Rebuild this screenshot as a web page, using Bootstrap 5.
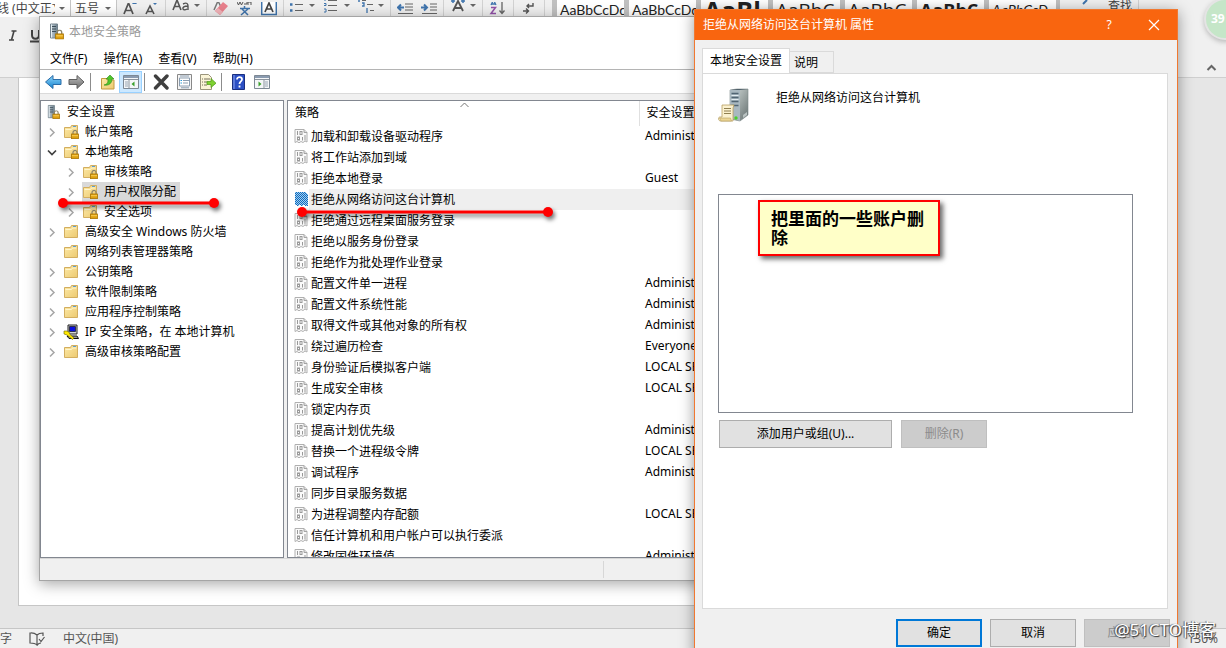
<!DOCTYPE html>
<html lang="zh-CN">
<head>
<meta charset="utf-8">
<meta name="viewport" content="width=device-width, initial-scale=1">
<title>本地安全策略</title>
<link href="https://cdn.jsdelivr.net/npm/bootstrap@5.3.0/dist/css/bootstrap.min.css" rel="stylesheet">
<style>
  body { font: 12px/20px "Noto Sans", "Noto Sans CJK SC", sans-serif; color: #000; background: #e6e6e6; }
  svg { display: block; flex: none; }
  button { font: inherit; color: inherit; }
  ul { list-style: none; margin: 0; padding: 0; }

  /* word processor behind */
  .ribbon { background: #f0f0f0; height: 78px; border-bottom: 1px solid #cfcfcf; color: #444; }
  .ribbon-top { height: 17px; }
  .ribbon button, .bare { border: 0; background: transparent; padding: 0; }
  .rgroup { border-right: 1px solid #d2d2d2; padding: 0 6px; gap: 8px; height: 17px; }
  .combo { background: #fff; border-right: 1px solid #c6c6c6; padding-right: 5px; height: 17px; }
  .combo input { border: 0; background: transparent; padding: 0; font: inherit; color: #444; height: 14px; min-width: 0; outline: 0; }
  .font-name { width: 71px; } .font-size { width: 46px; }
  .font-name input { text-indent: -3px; }
  .caret { width: 0; border: 3px solid transparent; border-top-color: #666; border-bottom: 0; }
  .gallery { background: #c0c0c0; margin-left: 7px; padding: 0 5px; gap: 5px; height: 17px; width: 508px; }
  .gallery button { background: #fff; flex: 0 0 67px; overflow: hidden; text-align: left; padding-left: 3px; color: #222; white-space: nowrap; height: 17px; }
  .st-body { font: 14px/20px Lato, sans-serif; }
  .st-h1 { font: bold 25px/20px "Open Sans", sans-serif; }
  .st-h2 { font: 19px/20px "Open Sans", sans-serif; }
  .st-h3 { font: bold 18px/20px "Open Sans", sans-serif; }
  .st-em { font: italic 14px/20px Lato, sans-serif; }
  .style-row { gap: 12px; }
  .doc { background: #fff; border: 1px solid #c6c6c6; border-top: 0; margin: 0 140px 22px 18px; }
  .appstatus { height: 20px; border-top: 1px solid #c6c6c6; background: #f0f0f0; color: #555; }
  .orb { right: -20px; top: -2px; width: 42px; height: 42px; border-radius: 50%; border: 2px solid #e4e4e4; background: #c5e6c8; color: #fff; font: bold 12px/38px "Open Sans", sans-serif; padding-left: 5px; box-shadow: 0 2px 5px #bbb; }

  /* policy console */
  .console { left: 39px; right: 200px; top: 16px; bottom: 67px; border: 1px solid #a5a5a5; background: #f0f0f0; box-shadow: 0 3px 14px rgba(0,0,0,.35); }
  .console-title { height: 30px; padding: 0 9px; gap: 4px; color: #999; background: #fff; }
  .menubar { height: 24px; padding: 2px 10px 0; gap: 16px; background: #fff; border-bottom: 1px solid #b4b4b4; }
  .toolbar { height: 24px; padding: 1px 0 0 2px; background: #fff; border-bottom: 1px solid #dadada; }
  .toolbar button { width: 23px; height: 22px; display: flex; align-items: center; justify-content: center; border: 1px solid transparent; background: none; padding: 0; }
  .toolbar button.on { background: #cce8ff; border-color: #99d1ff; }
  .tsep { width: 8px; height: 18px; border-left: 1px solid #8c8c8c; margin-left: 2px; margin-right: -2px; }
  .panes { margin-top: 6px; gap: 3px; min-height: 0; }
  .pane { background: #fff; border: 1px solid #828790; overflow: hidden; }
  .tree { width: 244px; padding: 1px 0 0 6px; }
  .tree .node { height: 20px; gap: 2px; position: relative; white-space: nowrap; }
  .tree .lvl2 { padding-left: 19px; }
  .chev { width: 14px; height: 20px; }
  .node .lab { padding: 0 4px; }
  .node .picked { background: #d9d9d9; }
  .node .picked .lab { padding-left: 6px; }
  .policy { width: 100%; table-layout: fixed; border-collapse: collapse; }
  .policy th { font-weight: normal; height: 25px; padding: 0 7px; border: 0; }
  .policy th:first-child { width: 351px; border-right: 1px solid #e0e0e0; position: relative; }
  .policy td { height: 21px; padding: 0 0 0 6px; white-space: nowrap; }
  .policy td .lab { line-height: 21px; flex: 1; padding-left: 2px; }
  .policy tr.hot .lab, .policy tr.hot td + td { background: #efefef; }
  .sort { left: 172px; top: 1px; }
  .console-status { height: 22px; border-top: 1px solid #d7d7d7; }
  .console-status div { width: 564px; margin: 2px 0; border-right: 1px solid #d7d7d7; }
  .mark-line { pointer-events: none; filter: drop-shadow(2px 3px 2px rgba(0,0,0,.55)); z-index: 2; }
  .ml-tree { left: -9px; top: 15px; }
  .ml-list { left: 2px; top: 16px; }

  /* properties dialog */
  .dialog { right: 48px; top: 9px; bottom: -8px; width: 484px; border: 1px solid #f07830; background: #f0f0f0; box-shadow: 0 3px 14px rgba(0,0,0,.4); }
  .dialog-title { height: 30px; background: #f9650f; color: #fff; padding: 0 15px 0 8px; }
  .dialog-title button { border: 0; background: none; padding: 0; width: 14px; }
  .tabs { padding: 9px 7px 0; height: 33px; }
  .tabs button { border: 1px solid #dadada; background: #f0f0f0; padding: 2px 3px 0 4px; height: 22px; line-height: 18px; border-left: 0; width: 44px; text-align: left; }
  .tabs button.cur { background: #fff; border: 1px solid #dadada; border-bottom: 0; height: 25px; width: 88px; padding: 0 0 0 7px; position: relative; z-index: 1; }
  .sheet { margin: 0 9px 0 7px; background: #fff; border: 1px solid #dadada; padding: 14px 34px 0 15px; }
  .sheet .caption { padding-left: 26px; }
  .users { width: 100%; height: 219px; border: 1px solid #828790; background: #fff; display: block; appearance: none; padding: 0; outline: 0; border-radius: 0; }
  .note { left: 40px; top: 6px; width: 182px; padding: 6px 10px 8px 11px; border: 2px solid #f00; background: #ffffc8; font: bold 17px/19px "Noto Sans CJK SC", sans-serif; box-shadow: 3px 3px 5px rgba(0,0,0,.6); }
  .user-actions { gap: 9px; padding: 7px 0 0 1px; }
  .wbtn { height: 28px; width: 86px; border: 1px solid #adadad; background: #e1e1e1; padding: 0; }
  .wbtn.wide { width: 173px; }
  .wbtn.def { border: 2px solid #0078d7; }
  .wbtn:disabled { background: #ccc; border-color: #bfbfbf; color: #8b8b8b; }
  .dialog-foot { padding: 10px 7px 0 0; gap: 8px; height: 46px; }
  .wmark { right: 10px; bottom: 6px; font-size: 17px; line-height: 24px; color: #fff; text-shadow: 1px 1px 1px #333, -1px 0 1px #555; z-index: 5; }
</style>
</head>
<body class="vh-100 overflow-hidden position-relative d-flex flex-column">

<svg width="0" height="0" class="position-absolute" aria-hidden="true">
  <defs>
    <linearGradient id="gf" x2="1" y2="1"><stop stop-color="#fdeaa8"/><stop offset="1" stop-color="#ecc970"/></linearGradient>
    <linearGradient id="gs" x2="1"><stop stop-color="#c8d4dc"/><stop offset="1" stop-color="#6b7f8c"/></linearGradient>
    <linearGradient id="gb" x2="0" y2="1"><stop stop-color="#8fd6fb"/><stop offset="1" stop-color="#1583cf"/></linearGradient>
    <linearGradient id="gg" x2="0" y2="1"><stop stop-color="#bdbdbd"/><stop offset="1" stop-color="#6c6c6c"/></linearGradient>
    <linearGradient id="gt" x2="1" y2="1"><stop stop-color="#d7dfdd"/><stop offset="1" stop-color="#65706f"/></linearGradient>
    <symbol id="i-lock" viewBox="0 0 8 9"><path d="M2 4V2.500a2 2 0 0 1 4 0V4" fill="none" stroke="#8c8468" stroke-width="1.200"/><rect x=".5" y="4" width="7" height="4.600" fill="#dfa010" stroke="#a87506" stroke-width=".8"/><path d="M1 5.700h6" stroke="#ffd968" stroke-width=".8"/></symbol>
    <symbol id="i-folder" viewBox="0 0 16 16"><path d="M1.500 3.500h6l1-2h6v12h-13z" fill="url(#gf)" stroke="#d3ae60"/><path d="M2.500 5.500h6l1-1.500h4" fill="none" stroke="#fff6cf"/><path d="M10 2.500h3" stroke="#5c9ed0"/></symbol>
    <symbol id="i-flock" viewBox="0 0 16 16"><use href="#i-folder" width="16" height="16"/><use href="#i-lock" x="8" y="6" width="8" height="9"/></symbol>
    <symbol id="i-root" viewBox="0 0 16 16"><path d="M1.500.5h7v14h-7z" fill="url(#gs)" stroke="#74838d"/><path d="M3 3h4M3 5.500h4M3 8h4" stroke="#3c4c57"/><path d="M2.500 1v13" stroke="#e8f0f4"/><use href="#i-lock" x="6" y="6" width="9" height="10"/></symbol>
    <symbol id="i-ip" viewBox="0 0 16 16"><path d="M5 1h9v9H5z" fill="#d5d5d5" stroke="#222"/><path d="M6.500 2.500h6v5h-6z" fill="#0a10e0" stroke="#111" stroke-width=".7"/><path d="M4 12h10l1.500 2.500H6z" fill="#9a9a9a" stroke="#111"/><path d="M1 7h3l3 2-.5 1L11 14l-1.500 1.500L4 11 1 10z" fill="#ffe800" stroke="#6a6100" stroke-width=".6"/></symbol>
    <symbol id="i-pol" viewBox="0 0 14 16"><path d="M.5 1.500h9l3 3V14l-2-1-2 1.500-2-1-2 1.300-2-1.300-2 1z" fill="#fafafa" stroke="#b0b0b0"/><path d="M9.500 1.500v3h3" fill="#ddd" stroke="#a4a4a4"/><path d="M3 3v4M8 9v3.500" stroke="#999"/><rect x="5.500" y="3.500" width="2" height="3" fill="none" stroke="#999"/><rect x="3" y="9" width="2" height="3" fill="none" stroke="#999"/><path d="M10.500 7v5.500" stroke="#999"/></symbol>
    <symbol id="i-r" viewBox="0 0 14 20"><path d="M3 6.500l4 4-4 4" fill="none" stroke="#a6a6a6" stroke-width="1.500"/></symbol>
    <symbol id="i-d" viewBox="0 0 14 20"><path d="M1 8.500l4 4 4-4" fill="none" stroke="#404040" stroke-width="1.700"/></symbol>
    <symbol id="i-pane" viewBox="0 0 16 16"><path d="M.5 1.500h15v13H.5z" fill="#f4f6f8" stroke="#7d8894"/><path d="M1 3h14" stroke="#8a9bb0" stroke-width="2"/><path d="M1 5.500h14M6 6v8" stroke="#8b949e"/><path d="M2 8h3M2 10h3M2 12h3" stroke="#9aa7b5"/></symbol>
  </defs>
</svg>

<header class="ribbon flex-shrink-0 position-relative">
  <div class="ribbon-top d-flex align-items-start">
    <div class="combo font-name d-flex align-items-center"><input class="flex-fill w-25" aria-label="字体" value="线 (中文正文)"><span class="caret ms-1"></span></div>
    <div class="combo font-size d-flex align-items-center ps-1"><input class="flex-fill w-25" aria-label="字号" value="五号"><span class="caret"></span></div>
    <div class="rgroup d-flex">
      <button aria-label="增大字号"><svg width="14" height="12"><path d="M1 11L5.500 0 10 11M3 7.500h5" fill="none" stroke="#555" stroke-width="1.700"/><path d="M9 1l2.500-3L14 1z" fill="#3f74ad"/></svg></button>
      <button aria-label="缩小字号"><svg width="14" height="12"><path d="M1 11L5 3l4 8M2.500 8.500h5" fill="none" stroke="#555" stroke-width="1.600"/><path d="M8 0h4l-2 2z" fill="#3f74ad"/></svg></button>
    </div>
    <div class="rgroup d-flex">
      <button aria-label="更改大小写" class="d-flex"><svg width="18" height="12"><path d="M1 10L5 0l4 10M2.500 6.500h5" fill="none" stroke="#555" stroke-width="1.600"/><path d="M11 4c4-2 5 0 5 2v4M15.500 6c-7 0-5 6-.5 3" fill="none" stroke="#555" stroke-width="1.400"/></svg><span class="caret mt-1 ms-1"></span></button>
    </div>
    <div class="rgroup d-flex">
      <button aria-label="清除格式"><svg width="16" height="14"><path d="M1 8L5-1l3 6" fill="none" stroke="#777" stroke-width="1.500"/><path d="M2 9l8-9 5 4-8 9z" fill="#e8808c"/><path d="M2 9l3-3 5 4-3 3z" fill="#f3b3b9"/></svg></button>
      <button aria-label="拼音指南"><svg width="16" height="14"><path d="M0 0l1.500 3L3 0l1.500 3L6 0M7 2h3V0M11 3V0h3v3" fill="none" stroke="#555"/><path d="M7.500 4v2.500M3 6.500h10M5 7l6 6M11 7l-7 6" fill="none" stroke="#3f74ad" stroke-width="1.500"/></svg></button>
      <button aria-label="字符边框"><svg width="16" height="14"><path d="M.7-1h14.600v13.500H.7z" fill="#fff" stroke="#3f74ad" stroke-width="1.500"/><path d="M4 10l4-9 4 9M5.500 7h5" fill="none" stroke="#444" stroke-width="1.700"/></svg></button>
    </div>
    <div class="rgroup d-flex">
      <button class="d-flex gap-1" aria-label="项目符号"><svg width="15" height="13"><path d="M0 4.500h2.500M0 10.500h2.500" stroke="#3f74ad" stroke-width="2.500"/><path d="M5 4.500h8M5 10.500h8" stroke="#666"/></svg><span class="caret mt-1"></span></button>
      <button class="d-flex gap-1" aria-label="编号"><svg width="17" height="13"><path d="M1 0h2M1 3.500h2v2H1M1 9h2v3H1" fill="none" stroke="#3f74ad"/><path d="M5 .5h9M5 5.500h9M5 10.500h9" stroke="#666"/></svg><span class="caret mt-1"></span></button>
      <button class="d-flex gap-1" aria-label="多级列表"><svg width="16" height="13"><path d="M0 1h2M4 3h2v3H4M9 8v5" fill="none" stroke="#3f74ad" stroke-width="1.300"/><path d="M4 .5h4M9 4.500h6M12 10.500h4" stroke="#666"/></svg><span class="caret mt-1"></span></button>
    </div>
    <div class="rgroup d-flex">
      <button aria-label="减少缩进"><svg width="16" height="12"><path d="M8 1h8M8 4h8M8 7h8M1 10.500h15" stroke="#666"/><path d="M7 4.500H1M4 1.500l-3 3 3 3" fill="none" stroke="#3f74ad" stroke-width="2"/></svg></button>
      <button aria-label="增加缩进"><svg width="16" height="12"><path d="M9 1h7M9 4h7M9 7h7M1 10.500h15" stroke="#666"/><path d="M0 4.500h6M3 1.500l3 3-3 3" fill="none" stroke="#3f74ad" stroke-width="2"/></svg></button>
    </div>
    <div class="rgroup d-flex">
      <button class="d-flex gap-1" aria-label="中文版式"><svg width="16" height="12"><path d="M3 11L8 1l5 10M5 8h6" fill="none" stroke="#555" stroke-width="1.800"/><path d="M1 1h4M11 1h4M3 0v3M13 0v3" stroke="#3f74ad" stroke-width="1.500"/></svg><span class="caret mt-1"></span></button>
    </div>
    <div class="rgroup d-flex"><button aria-label="排序"><svg width="18" height="13"><path d="M2 3L4.500-2 7 3M3 2h3" fill="none" stroke="#3f74ad" stroke-width="1.300"/><path d="M2 5.500h4.500L2 11.500h5" fill="none" stroke="#9252a8" stroke-width="1.500"/><path d="M13 0v11M10.500 8.500l2.500 3 2.500-3" fill="none" stroke="#666" stroke-width="1.300"/></svg></button></div>
    <div class="rgroup d-flex"><button aria-label="显示编辑标记"><svg width="18" height="12"><path d="M13 0v3H7M9 1L7 3l2 2M3 8h5M6 5.500L8.500 8 6 10.500" fill="none" stroke="#555" stroke-width="1.400"/></svg></button></div>
    <div class="gallery d-flex">
      <button class="st-body">AaBbCcDd</button><button class="st-body">AaBbCcDd</button><button class="st-h1">AaBl</button><button class="st-h2">AaBbC</button><button class="st-h2">AaBbC</button><button class="st-h3">AaBbC</button><button class="st-em">AaBbCcD</button>
    </div>
    <div class="rgroup d-flex ms-3"><button class="d-flex gap-3"><svg width="10" height="6"><path d="M1 4l4-4" stroke="#3f74ad" stroke-width="2"/></svg><span class="lh-1">查找</span></button></div>
  </div>
  <div class="style-row d-flex ps-2 pt-2">
    <button aria-label="倾斜"><svg width="10" height="22"><path d="M3.500 6h5M1 15h5M6 6l-2.500 9" fill="none" stroke="#444" stroke-width="1.600"/></svg></button>
    <button aria-label="下划线"><svg width="12" height="22"><path d="M2 5v5c0 5 7 5 7 0V5M0 16.500h11" fill="none" stroke="#444" stroke-width="2"/></svg></button>
  </div>
  <div class="orb position-absolute">39</div>
  <button class="position-absolute end-0 bottom-0 pb-1 pe-2" aria-label="折叠功能区"><svg width="13" height="10"><path d="M2.500 7l4-4 4 4" fill="none" stroke="#666" stroke-width="2"/></svg></button>
</header>
<main class="doc flex-fill"></main>
<footer class="appstatus flex-shrink-0 d-flex align-items-center justify-content-between pe-2">
  <div class="d-flex align-items-center"><span class="me-3">字</span><svg class="me-3" width="19" height="14"><path d="M9 3C6 .5 4 1 2 1v10c3 0 5 0 7 2V3c2-2 4-2 6-2v3M9 13c2-2 3-2 4-2M11 7l2 2.500L16.500 5" fill="none" stroke="#555" stroke-width="1.200"/></svg><span>中文(中国)</span></div>
  <span>130%</span>
</footer>

<section class="console position-absolute d-flex flex-column">
  <div class="console-title d-flex align-items-center"><svg width="16" height="17"><use href="#i-root"/></svg><span>本地安全策略</span></div>
  <nav class="menubar d-flex align-items-center"><button class="bare">文件(F)</button><button class="bare">操作(A)</button><button class="bare">查看(V)</button><button class="bare">帮助(H)</button></nav>
  <div class="toolbar d-flex align-items-center">
    <button aria-label="后退"><svg width="17" height="16"><path d="M.5 8L8 1.500v4h8v5H8v4z" fill="url(#gb)" stroke="#2b6da8"/></svg></button>
    <button aria-label="前进"><svg width="17" height="16"><path d="M16 8L9 1.500v4H1v5h8v4z" fill="url(#gg)" stroke="#5f5f5f"/></svg></button>
    <span class="tsep"></span>
    <button aria-label="向上"><svg width="16" height="16"><path d="M1.500 4.500h5l1 1.500h6.500v9h-12.500z" fill="url(#gf)" stroke="#c49a42"/><path d="M4 11c4-1 4-3 4-6H6l4-4 4 4h-2c0 4-3 7-8 6z" fill="#4fc52b" stroke="#2f8a1a" stroke-width=".6"/></svg></button>
    <button class="on" aria-label="显示控制台树"><svg width="16" height="16"><use href="#i-pane"/><path d="M11.500 7.500v5L8.500 10z" fill="#3aa02c"/></svg></button>
    <span class="tsep"></span>
    <button aria-label="删除"><svg width="17" height="16"><path d="M2.500 2l11.500 12M14 2L2.500 14" stroke="#3f3f3f" stroke-width="3.400" stroke-linecap="round"/></svg></button>
    <button aria-label="属性"><svg width="16" height="16"><path d="M.5.5h14v15H.5z" fill="#f5f5f5" stroke="#888"/><path d="M2.500 4h10v8h-10z" fill="#fff" stroke="#8b9db0"/><path d="M3 2h9M6 6.500h6M6 9h5M4 13.800h8" stroke="#8b9db0"/><path d="M3.500 6.500h1.500M3.500 9h1.500" stroke="#2b9ad6"/></svg></button>
    <button aria-label="导出列表"><svg width="17" height="16"><path d="M1.500.5h8l3 3v12h-11z" fill="#fbf5d8" stroke="#9b957c"/><path d="M3 5h1M3 8h1M3 11h1M5 5h6M5 8h3M5 11h3" stroke="#77715c"/><path d="M8 7.500h4v-3l5 4.700-5 4.300v-3H8z" fill="#7fd131" stroke="#4b9714" stroke-width=".7"/></svg></button>
    <span class="tsep"></span>
    <button aria-label="帮助"><svg width="14" height="16"><path d="M.5.5h12v15H.5z" fill="#2b4fc4" stroke="#1a2f80"/><path d="M2 1v14" stroke="#8fa6ee"/><path d="M5 5.500c0-3.500 5.500-3 5 0C9.800 7.500 7.500 7.500 7.500 10M7.500 11.500v2" fill="none" stroke="#fff" stroke-width="1.800"/></svg></button>
    <button aria-label="显示操作窗格"><svg width="16" height="16"><use href="#i-pane" transform="matrix(-1 0 0 1 16 0)"/><path d="M4.500 7.500v5l3-2.500z" fill="#3aa02c"/></svg></button>
  </div>

  <div class="panes d-flex flex-fill">
    <nav class="pane tree flex-shrink-0">
      <div class="node d-flex align-items-center"><svg width="14" height="16"><use href="#i-root"/></svg><span class="lab ps-1">安全设置</span></div>
      <ul>
        <li><div class="node d-flex align-items-center"><svg class="chev"><use href="#i-r"/></svg><svg width="16" height="16"><use href="#i-flock"/></svg><span class="lab">帐户策略</span></div></li>
        <li><div class="node d-flex align-items-center"><svg class="chev"><use href="#i-d"/></svg><svg width="16" height="16"><use href="#i-flock"/></svg><span class="lab">本地策略</span></div>
          <ul class="lvl2">
            <li><div class="node d-flex align-items-center"><svg class="chev"><use href="#i-r"/></svg><svg width="16" height="16"><use href="#i-flock"/></svg><span class="lab">审核策略</span></div></li>
            <li><div class="node d-flex align-items-center"><svg class="chev"><use href="#i-r"/></svg><span class="picked d-flex align-items-center"><svg width="16" height="16"><use href="#i-flock"/></svg><span class="lab">用户权限分配</span></span>
              <svg class="mark-line ml-tree position-absolute" width="164" height="14"><path d="M6 6h151" stroke="#f00" stroke-width="3"/><circle cx="6" cy="6" r="5" fill="#f00"/><circle cx="157" cy="6" r="5" fill="#f00"/></svg></div></li>
            <li><div class="node d-flex align-items-center"><svg class="chev"><use href="#i-r"/></svg><svg width="16" height="16"><use href="#i-flock"/></svg><span class="lab">安全选项</span></div></li>
          </ul></li>
        <li><div class="node d-flex align-items-center"><svg class="chev"><use href="#i-r"/></svg><svg width="16" height="16"><use href="#i-folder"/></svg><span class="lab">高级安全 Windows 防火墙</span></div></li>
        <li><div class="node d-flex align-items-center"><span class="chev"></span><svg width="16" height="16"><use href="#i-folder"/></svg><span class="lab">网络列表管理器策略</span></div></li>
        <li><div class="node d-flex align-items-center"><svg class="chev"><use href="#i-r"/></svg><svg width="16" height="16"><use href="#i-folder"/></svg><span class="lab">公钥策略</span></div></li>
        <li><div class="node d-flex align-items-center"><svg class="chev"><use href="#i-r"/></svg><svg width="16" height="16"><use href="#i-folder"/></svg><span class="lab">软件限制策略</span></div></li>
        <li><div class="node d-flex align-items-center"><svg class="chev"><use href="#i-r"/></svg><svg width="16" height="16"><use href="#i-folder"/></svg><span class="lab">应用程序控制策略</span></div></li>
        <li><div class="node d-flex align-items-center"><svg class="chev"><use href="#i-r"/></svg><svg width="16" height="16"><use href="#i-ip"/></svg><span class="lab">IP 安全策略，在 本地计算机</span></div></li>
        <li><div class="node d-flex align-items-center"><svg class="chev"><use href="#i-r"/></svg><svg width="16" height="16"><use href="#i-folder"/></svg><span class="lab">高级审核策略配置</span></div></li>
      </ul>
    </nav>
    <div class="pane flex-fill">
      <table class="policy">
        <thead><tr><th>策略<svg class="sort position-absolute" width="9" height="6"><path d="M.5 5l4-4 4 4" fill="none" stroke="#777"/></svg></th><th>安全设置</th></tr></thead>
        <tbody>
          <tr><td><div class="d-flex align-items-center"><svg width="15" height="16"><use href="#i-pol"/></svg><span class="lab">加载和卸载设备驱动程序</span></div></td><td>Administrators</td></tr>
          <tr><td><div class="d-flex align-items-center"><svg width="15" height="16"><use href="#i-pol"/></svg><span class="lab">将工作站添加到域</span></div></td><td></td></tr>
          <tr><td><div class="d-flex align-items-center"><svg width="15" height="16"><use href="#i-pol"/></svg><span class="lab">拒绝本地登录</span></div></td><td>Guest</td></tr>
          <tr class="hot"><td><div class="d-flex align-items-center position-relative"><svg width="15" height="16" shape-rendering="crispEdges"><pattern id="dots" width="2" height="2" patternUnits="userSpaceOnUse"><path fill="#0c6cc0" d="M0 0h2v2H0z"/><path fill="#a5cdee" d="M0 0h1v1H0zM1 1h1v1H1z"/></pattern><path d="M1 1h10l3 3v11h-2l-2-1-2 1-2-1-2 1-3-1z" fill="url(#dots)"/></svg><span class="lab">拒绝从网络访问这台计算机</span>
            <svg class="mark-line ml-list position-absolute" width="260" height="14"><path d="M6 7h246" stroke="#f00" stroke-width="3"/><circle cx="6" cy="7" r="5" fill="#f00"/><circle cx="252" cy="7" r="5" fill="#f00"/></svg></div></td><td></td></tr>
          <tr><td><div class="d-flex align-items-center"><svg width="15" height="16"><use href="#i-pol"/></svg><span class="lab">拒绝通过远程桌面服务登录</span></div></td><td></td></tr>
          <tr><td><div class="d-flex align-items-center"><svg width="15" height="16"><use href="#i-pol"/></svg><span class="lab">拒绝以服务身份登录</span></div></td><td></td></tr>
          <tr><td><div class="d-flex align-items-center"><svg width="15" height="16"><use href="#i-pol"/></svg><span class="lab">拒绝作为批处理作业登录</span></div></td><td></td></tr>
          <tr><td><div class="d-flex align-items-center"><svg width="15" height="16"><use href="#i-pol"/></svg><span class="lab">配置文件单一进程</span></div></td><td>Administrators</td></tr>
          <tr><td><div class="d-flex align-items-center"><svg width="15" height="16"><use href="#i-pol"/></svg><span class="lab">配置文件系统性能</span></div></td><td>Administrators</td></tr>
          <tr><td><div class="d-flex align-items-center"><svg width="15" height="16"><use href="#i-pol"/></svg><span class="lab">取得文件或其他对象的所有权</span></div></td><td>Administrators</td></tr>
          <tr><td><div class="d-flex align-items-center"><svg width="15" height="16"><use href="#i-pol"/></svg><span class="lab">绕过遍历检查</span></div></td><td>Everyone</td></tr>
          <tr><td><div class="d-flex align-items-center"><svg width="15" height="16"><use href="#i-pol"/></svg><span class="lab">身份验证后模拟客户端</span></div></td><td>LOCAL SERVICE</td></tr>
          <tr><td><div class="d-flex align-items-center"><svg width="15" height="16"><use href="#i-pol"/></svg><span class="lab">生成安全审核</span></div></td><td>LOCAL SERVICE</td></tr>
          <tr><td><div class="d-flex align-items-center"><svg width="15" height="16"><use href="#i-pol"/></svg><span class="lab">锁定内存页</span></div></td><td></td></tr>
          <tr><td><div class="d-flex align-items-center"><svg width="15" height="16"><use href="#i-pol"/></svg><span class="lab">提高计划优先级</span></div></td><td>Administrators</td></tr>
          <tr><td><div class="d-flex align-items-center"><svg width="15" height="16"><use href="#i-pol"/></svg><span class="lab">替换一个进程级令牌</span></div></td><td>LOCAL SERVICE</td></tr>
          <tr><td><div class="d-flex align-items-center"><svg width="15" height="16"><use href="#i-pol"/></svg><span class="lab">调试程序</span></div></td><td>Administrators</td></tr>
          <tr><td><div class="d-flex align-items-center"><svg width="15" height="16"><use href="#i-pol"/></svg><span class="lab">同步目录服务数据</span></div></td><td></td></tr>
          <tr><td><div class="d-flex align-items-center"><svg width="15" height="16"><use href="#i-pol"/></svg><span class="lab">为进程调整内存配额</span></div></td><td>LOCAL SERVICE</td></tr>
          <tr><td><div class="d-flex align-items-center"><svg width="15" height="16"><use href="#i-pol"/></svg><span class="lab">信任计算机和用户帐户可以执行委派</span></div></td><td></td></tr>
          <tr><td><div class="d-flex align-items-center"><svg width="15" height="16"><use href="#i-pol"/></svg><span class="lab">修改固件环境值</span></div></td><td>Administrators</td></tr>
        </tbody>
      </table>
    </div>
  </div>
  <div class="console-status flex-shrink-0 d-flex"><div></div></div>
</section>

<section class="dialog position-absolute d-flex flex-column" role="dialog" aria-label="拒绝从网络访问这台计算机 属性">
  <div class="dialog-title d-flex align-items-center flex-shrink-0"><span class="me-auto">拒绝从网络访问这台计算机 属性</span><button class="me-4" aria-label="帮助">?</button><button class="ms-2" aria-label="关闭"><svg width="12" height="12"><path d="M1 1l10 10M11 1L1 11" stroke="#fff" stroke-width="1.200"/></svg></button></div>
  <div class="tabs d-flex align-items-end flex-shrink-0" role="tablist"><button class="cur" role="tab">本地安全设置</button><button role="tab">说明</button></div>
  <div class="sheet flex-fill">
    <div class="d-flex align-items-start mb-5 pb-4">
      <svg width="32" height="34"><path d="M12 2l7-1h11v26l-8 6-10-2z" fill="url(#gt)" stroke="#7b8786" stroke-width=".6"/><path d="M12 2h10v31l-10-3z" fill="#a9b8c0"/><path d="M12 2h10l8-1H19z" fill="#50606a"/><path d="M13.500 5.500h7M13.500 9.500h7M13.500 13.500h7M13.500 17.500h7" stroke="#516573" stroke-width="1.500"/><path d="M13.500 7.500h7M13.500 11.500h7" stroke="#e3edf2"/><path d="M25 27l4-3v3l-4 3z" fill="#b9c2c1"/><circle cx="18" cy="30" r="1.700" fill="#49d02c"/><path d="M4 17h12l-1 3v13H2c-2-1-2-4 0-4h2z" fill="#fbf1cf" stroke="#b79f5f" stroke-width=".8"/><path d="M1.500 30h11l1 3H3z" fill="#ecd594" stroke="#b79f5f" stroke-width=".6"/><path d="M6 20.500h7M6 23h7M6 25.500h7" stroke="#8f7f50"/></svg>
      <span class="caption">拒绝从网络访问这台计算机</span>
    </div>
    <div class="position-relative">
      <select class="users" multiple aria-label="用户或组"></select>
      <div class="note position-absolute">把里面的一些账户删除</div>
    </div>
    <div class="user-actions d-flex"><button class="wbtn wide">添加用户或组(U)...</button><button class="wbtn" disabled>删除(R)</button></div>
  </div>
  <div class="dialog-foot d-flex justify-content-end flex-shrink-0"><button class="wbtn def">确定</button><button class="wbtn">取消</button><button class="wbtn" disabled>应用(A)</button></div>
</section>
<div class="wmark position-absolute">@51CTO博客</div>

<script src="https://cdn.jsdelivr.net/npm/bootstrap@5.3.0/dist/js/bootstrap.bundle.min.js"></script>
</body>
</html>
